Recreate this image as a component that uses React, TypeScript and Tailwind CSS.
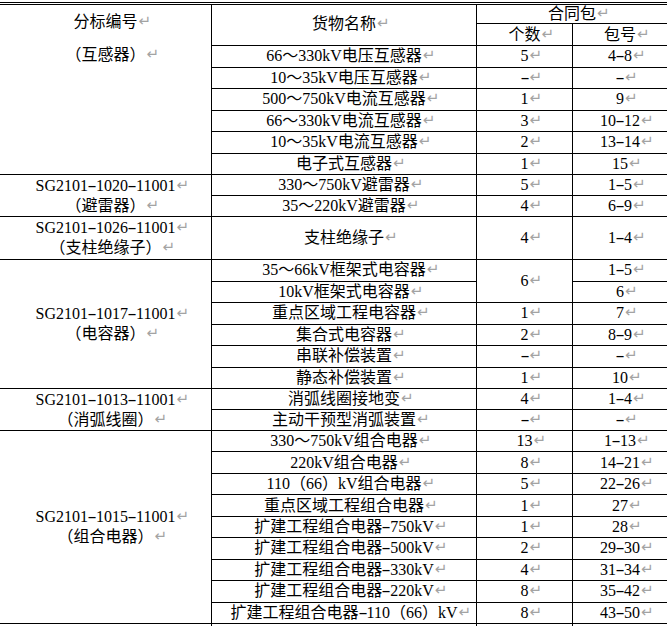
import React from 'react';

type Item = { name: string; count?: string; pkg: string; countSpan?: number };

interface Group {
  code: string[];
  span: string;
  items: Item[];
}

const groups: Group[] = [
  {
    code: ['SG2101-1020-11001', '（避雷器）'],
    span: 'row-span-2',
    items: [
      { name: '330～750kV避雷器', count: '5', pkg: '1-5' },
      { name: '35～220kV避雷器', count: '4', pkg: '6-9' },
    ],
  },
  {
    code: ['SG2101-1026-11001', '（支柱绝缘子）'],
    span: 'row-span-1',
    items: [{ name: '支柱绝缘子', count: '4', pkg: '1-4' }],
  },
  {
    code: ['SG2101-1017-11001', '（电容器）'],
    span: 'row-span-6',
    items: [
      { name: '35～66kV框架式电容器', count: '6', countSpan: 2, pkg: '1-5' },
      { name: '10kV框架式电容器', pkg: '6' },
      { name: '重点区域工程电容器', count: '1', pkg: '7' },
      { name: '集合式电容器', count: '2', pkg: '8-9' },
      { name: '串联补偿装置', count: '-', pkg: '-' },
      { name: '静态补偿装置', count: '1', pkg: '10' },
    ],
  },
  {
    code: ['SG2101-1013-11001', '（消弧线圈）'],
    span: 'row-span-2',
    items: [
      { name: '消弧线圈接地变', count: '4', pkg: '1-4' },
      { name: '主动干预型消弧装置', count: '-', pkg: '-' },
    ],
  },
  {
    code: ['SG2101-1015-11001', '（组合电器）'],
    span: 'row-span-9',
    items: [
      { name: '330～750kV组合电器', count: '13', pkg: '1-13' },
      { name: '220kV组合电器', count: '8', pkg: '14-21' },
      { name: '110（66）kV组合电器', count: '5', pkg: '22-26' },
      { name: '重点区域工程组合电器', count: '1', pkg: '27' },
      { name: '扩建工程组合电器-750kV', count: '1', pkg: '28' },
      { name: '扩建工程组合电器-500kV', count: '2', pkg: '29-30' },
      { name: '扩建工程组合电器-330kV', count: '4', pkg: '31-34' },
      { name: '扩建工程组合电器-220kV', count: '8', pkg: '35-42' },
      { name: '扩建工程组合电器-110（66）kV', count: '8', pkg: '43-50' },
    ],
  },
];

const transformers: Item[] = [
  { name: '66～330kV电压互感器', count: '5', pkg: '4-8' },
  { name: '10～35kV电压互感器', count: '-', pkg: '-' },
  { name: '500～750kV电流互感器', count: '1', pkg: '9' },
  { name: '66～330kV电流互感器', count: '3', pkg: '10-12' },
  { name: '10～35kV电流互感器', count: '2', pkg: '13-14' },
  { name: '电子式互感器', count: '1', pkg: '15' },
];

// the document font has half-width hyphens, so stretch ours a bit
function withHyphens(text: string) {
  const parts = text.split('-');
  return parts.map((p, i) => (
    <React.Fragment key={i}>
      {i > 0 && <span className="inline-block w-[8px] text-center scale-x-[1.7]">-</span>}
      {p}
    </React.Fragment>
  ));
}

// paragraph mark, kept out of the centering like Word does
function T({ text }: { text: string }) {
  return (
    <span className="relative whitespace-nowrap">
      {withHyphens(text)}
      <span className="absolute left-full bottom-[3px] ml-px font-['DejaVu_Sans'] text-[15px] leading-none text-[#a3a3a3]">
        ↵
      </span>
    </span>
  );
}

function Cell({ className = '', children }: { className?: string; children: React.ReactNode }) {
  return <div className={`bg-white flex flex-col items-center justify-center ${className}`}>{children}</div>;
}

function Rows({ items }: { items: Item[] }) {
  return (
    <>
      {items.map((item) => (
        <React.Fragment key={item.name}>
          <Cell>
            <T text={item.name} />
          </Cell>
          {item.count !== undefined && (
            <Cell className={item.countSpan === 2 ? 'row-span-2' : ''}>
              <T text={item.count} />
            </Cell>
          )}
          <Cell>
            <T text={item.pkg} />
          </Cell>
        </React.Fragment>
      ))}
    </>
  );
}

export default function App() {
  return (
    <div className="w-[667px] h-[626px] overflow-hidden bg-white pt-[2px] text-[16px] leading-[20px] text-black font-['Liberation_Serif','Noto_Sans_CJK_SC',serif]">
      <div className="border-t-[3px] border-double border-black" />
      <div className="grid grid-cols-[211px_264px_95px_94px] grid-rows-[18px_21px_repeat(6,20.5px)_repeat(2,20px)_42px_repeat(6,20.5px)_repeat(2,20px)_repeat(9,20.45px)_3px] gap-px bg-black">
        {/* header + 互感器 */}
        <div className="row-span-8 bg-white flex flex-col items-center pt-[7px] gap-[13px]">
          <T text="分标编号" />
          <T text="（互感器）" />
        </div>
        <Cell className="row-span-2 pb-[3px]">
          <T text="货物名称" />
        </Cell>
        <Cell className="col-span-2">
          <T text="合同包" />
        </Cell>
        <Cell>
          <T text="个数" />
        </Cell>
        <Cell>
          <T text="包号" />
        </Cell>
        <Rows items={transformers} />

        {groups.map((g) => (
          <React.Fragment key={g.code[0]}>
            <Cell className={g.span}>
              <T text={g.code[0]} />
              <T text={g.code[1]} />
            </Cell>
            <Rows items={g.items} />
          </React.Fragment>
        ))}

        <div className="bg-white" />
        <div className="bg-white" />
        <div className="bg-white" />
        <div className="bg-white" />
      </div>
    </div>
  );
}
